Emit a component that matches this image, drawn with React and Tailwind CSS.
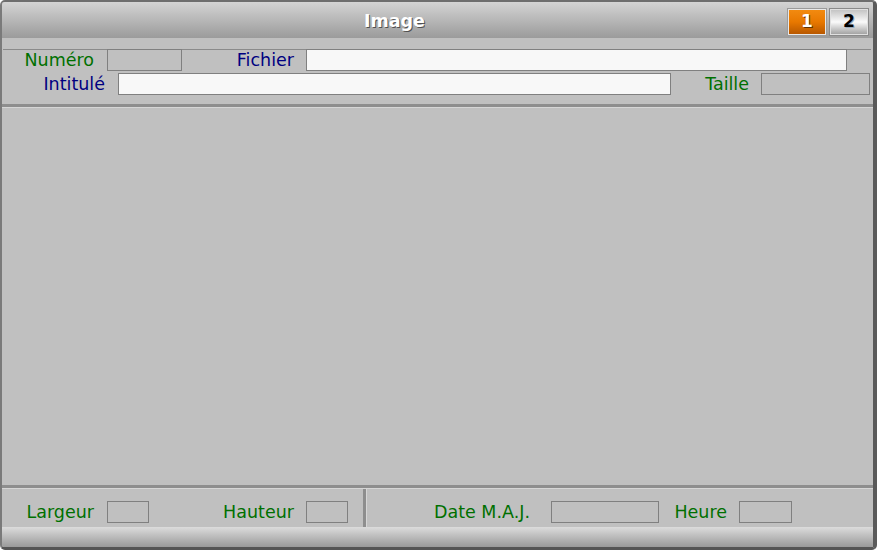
const font = { fontFamily: '"DejaVu Sans", Verdana, sans-serif' };

const Box = ({ w, white, className = "" }) => (
  <div
    className={`h-[22px] border border-[#808080] ${white ? "bg-[#f8f8f8]" : "bg-[#c0c0c0]"} ${className}`}
    style={{ width: w }}
  />
);

const Label = ({ children, w, navy, className = "" }) => (
  <div
    className={`shrink-0 text-right text-[17.5px] leading-[22px] ${navy ? "text-[#000080]" : "text-[#007000]"} ${className}`}
    style={{ width: w }}
  >
    {children}
  </div>
);

export default function App() {
  return (
    <div className="w-[877px] h-[550px] bg-white" style={font}>
      <div className="w-full h-full flex flex-col rounded-[5px] overflow-hidden bg-[#c0c0c0] border-l-2 border-t-2 border-r-[4px] border-b-[3px] border-l-[#7a7a7a] border-t-[#6e6e6e] border-r-[#5a5a5a] border-b-[#555]">
        {/* title bar */}
        <div className="relative h-[36px] shrink-0 bg-gradient-to-b from-[#d4d4d4] to-[#9b9b9b] flex items-center justify-center pr-[86px] pt-[3px]">
          <span className="text-[17.5px] font-bold text-white [text-shadow:1px_1px_0_#505050]">
            Image
          </span>
          <div className="absolute right-[4px] top-[6px] flex gap-[2px]">
            <div className="w-[40px] h-[28px] border border-[#9a9a9a] p-px bg-[#e8e8e8]">
              <div className="w-full h-full bg-gradient-to-b from-[#f28a10] via-[#e87800] to-[#b85800] flex items-center justify-center text-[17px] font-bold text-white [text-shadow:1px_1px_0_#603000]">
                1
              </div>
            </div>
            <div className="w-[40px] h-[28px] border border-[#8a8a8a] p-px bg-[#e0e0e0]">
              <div className="w-full h-full bg-gradient-to-b from-[#c4c4c4] via-[#fafafa] to-[#a4a4a4] flex items-center justify-center text-[17px] font-bold text-black [text-shadow:1px_1px_0_#9ab]">
                2
              </div>
            </div>
          </div>
        </div>

        {/* header fields */}
        <div className="h-[11px] shrink-0" />
        <div className="flex items-start h-[22px] border-t border-[#8a8a8a] mr-[2px] ml-px">
          <Label w={91} className="-mt-px">Numéro</Label>
          <Box w={75} className="ml-[13px] -mt-px" />
          <Label w={112} navy className="-mt-px">Fichier</Label>
          <Box w={541} white className="ml-[12px] -mt-px" />
        </div>
        <div className="flex items-start h-[22px] mt-[2px]">
          <Label w={103} navy>Intitulé</Label>
          <Box w={553} white className="ml-[13px]" />
          <Label w={78}>Taille</Label>
          <Box w={109} className="ml-[12px]" />
        </div>
        <div className="h-[9px] shrink-0" />
        <div className="h-[3px] shrink-0 bg-[#8e8e8e]" />
        <div className="h-px shrink-0 bg-[#d6d6d6]" />

        {/* main area */}
        <div className="flex-1" />

        {/* bottom fields */}
        <div className="h-[3px] shrink-0 bg-[#8e8e8e]" />
        <div className="h-px shrink-0 bg-[#d6d6d6]" />
        <div className="h-[38px] shrink-0 flex">
          <div className="w-[361px] flex items-start pt-[12px]">
            <Label w={92}>Largeur</Label>
            <Box w={42} className="ml-[13px]" />
            <Label w={145}>Hauteur</Label>
            <Box w={42} className="ml-[12px]" />
          </div>
          <div className="w-[3px] bg-[#8e8e8e]" />
          <div className="w-px bg-[#d6d6d6]" />
          <div className="flex-1 flex items-start pt-[12px]">
            <Label w={163}>Date M.A.J.</Label>
            <Box w={108} className="ml-[21px]" />
            <Label w={68}>Heure</Label>
            <Box w={53} className="ml-[12px]" />
          </div>
        </div>

        {/* footer */}
        <div className="h-[20px] shrink-0 bg-gradient-to-b from-[#dcdcdc] to-[#9a9a9a]" />
      </div>
    </div>
  );
}
